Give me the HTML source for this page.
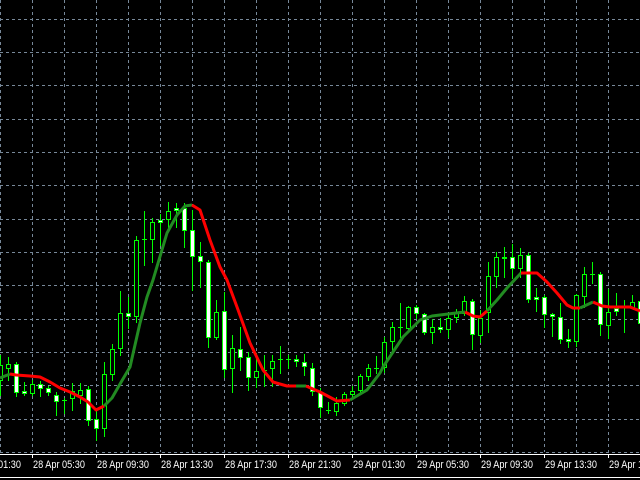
<!DOCTYPE html>
<html><head><meta charset="utf-8"><style>
html,body{margin:0;padding:0;background:#000;width:640px;height:480px;overflow:hidden}
svg{display:block}
text{font-family:"Liberation Sans",sans-serif;font-size:11px;fill:#fff}
</style></head><body>
<svg id="s" width="640" height="480" xmlns="http://www.w3.org/2000/svg" shape-rendering="crispEdges"></svg>
<script>
var s=document.getElementById('s'),h='';
for(var x=0;x<=640;x+=32)h+='<line x1="'+(x+0.5)+'" y1="0" x2="'+(x+0.5)+'" y2="452" stroke="#778899" stroke-dasharray="3,3"/>';
for(var k=0;k<14;k++){var y=Math.round(18.6+33.33*k)+0.5;h+='<line x1="0" y1="'+y+'" x2="640" y2="'+y+'" stroke="#778899" stroke-dasharray="3,3"/>';}
var c=[[0,355,365,380,395,0],[1,357,364,368,380,0],[2,362,364,392,396,1],[3,382,391,393,395,1],[4,380,384,393,395,0],[5,381,384,388,396,1],[6,386,388,392,395,1],[7,392,395,401,415,1],[8,398,400,400,413,0],[9,383,391,398,410,0],[10,383,390,395,403,0],[11,386,389,420,425,1],[12,410,419,428,440,1],[13,362,374,428,436,0],[14,344,349,374,380,0],[15,291,313,348,355,0],[16,297,313,316,328,1],[17,236,240,316,322,0],[18,211,239,239,265,0],[19,218,222,239,262,0],[20,214,220,222,245,1],[21,202,211,219,230,0],[22,203,208,210,227,1],[23,203,208,230,247,1],[24,210,230,256,290,1],[25,242,256,261,287,1],[26,260,262,337,347,1],[27,300,312,337,339,0],[28,292,311,369,377,1],[29,335,348,368,392,0],[30,327,349,357,370,1],[31,352,357,377,390,1],[32,353,371,377,387,0],[33,355,370,370,386,0],[34,355,361,368,386,0],[35,346,359,359,373,0],[36,355,359,359,368,0],[37,355,359,361,366,1],[38,354,362,366,375,1],[39,363,368,391,395,1],[40,388,392,407,417,1],[41,402,410,410,413,0],[42,397,403,411,415,0],[43,392,394,403,405,0],[44,386,391,394,398,0],[45,374,376,390,392,0],[46,364,368,376,380,0],[47,356,368,368,373,0],[48,337,342,367,372,0],[49,322,327,341,350,0],[50,303,327,327,337,0],[51,306,307,328,330,0],[52,305,307,313,318,1],[53,313,314,332,334,1],[54,319,327,332,343,0],[55,318,327,329,332,1],[56,315,318,329,337,0],[57,309,312,317,322,0],[58,296,301,313,315,0],[59,299,301,334,349,1],[60,310,318,335,342,0],[61,262,276,312,332,0],[62,252,257,276,287,0],[63,247,257,258,277,1],[64,244,257,268,278,1],[65,248,255,268,277,0],[66,253,255,299,302,1],[67,288,297,299,311,1],[68,295,297,314,327,1],[69,313,314,316,336,1],[70,303,317,339,343,1],[71,329,339,341,347,1],[72,294,295,341,346,0],[73,267,274,296,307,0],[74,262,274,274,283,0],[75,272,274,324,335,1],[76,289,312,325,338,0],[77,293,308,311,315,1],[78,300,307,307,332,0],[79,295,302,307,308,0],[80,300,301,323,330,1]];
var w='';
c.forEach(function(d){var x=d[0]*8;w+='<line x1="'+(x+0.5)+'" y1="'+d[1]+'" x2="'+(x+0.5)+'" y2="'+(d[4]+1)+'" stroke="#00ff00"/>';
var bt=d[2],bb=Math.max(d[3],d[2]);
if(bb-bt<1){w+='<rect x="'+(x-2)+'" y="'+bt+'" width="5" height="1" fill="#00ff00"/>';}
else w+='<rect x="'+(x-1.5)+'" y="'+(bt+0.5)+'" width="4" height="'+(bb-bt)+'" fill="'+(d[5]?'#fff':'#000')+'" stroke="#00ff00"/>';});
h+=w;
function pl(p,col){return '<polyline points="'+p+'" fill="none" stroke="'+col+'" stroke-width="3" stroke-linejoin="round" shape-rendering="auto"/>';}
var G='#228b22',R='#ff0000';
h+=pl('0,378 10,374',G);
h+=pl('10,374 16,375 30,376 40,377 50,382 60,388 70,392 80,397 88,402 96,410 104,406',R);
h+=pl('104,406 112,398 120,384 130,367 140,323 147,297 153,280 167,233 177,215 185,206 192,205',G);
h+=pl('192,205 200,210 210,240 220,267 227,280 237,307 250,343 263,370 273,382 287,386 296,386',R);
h+=pl('296,386 306,386',G);
h+=pl('306,386 320,392 337,401 350,400',R);
h+=pl('350,400 367,390 380,373 383,367 403,337 420,320 432,316 456,313 465,312',G);
h+=pl('465,312 473,316 480,317 487,311',R);
h+=pl('487,311 497,300 507,288 521,273',G);
h+=pl('521,273 537,273 547,282 557,293 567,305 573,308 580,308',R);
h+=pl('580,308 593,302',G);
h+=pl('593,302 602,306 610,307 630,307 640,311',R);
h+='<rect x="0" y="454" width="640" height="1" fill="#fff"/>';
h+='<rect x="0" y="477" width="640" height="1" fill="#fff"/>';
var L=[[-32,'28 Apr 01:30'],[32,'28 Apr 05:30'],[96,'28 Apr 09:30'],[160,'28 Apr 13:30'],[224,'28 Apr 17:30'],[288,'28 Apr 21:30'],[352,'29 Apr 01:30'],[416,'29 Apr 05:30'],[480,'29 Apr 09:30'],[544,'29 Apr 13:30'],[608,'29 Apr 17:30']];
L.forEach(function(l){h+='<rect x="'+l[0]+'" y="454" width="1" height="4" fill="#fff"/><text x="'+(l[0]+1)+'" y="468" textLength="52" lengthAdjust="spacingAndGlyphs">'+l[1]+'</text>';});
s.innerHTML=h;
</script>
</body></html>
